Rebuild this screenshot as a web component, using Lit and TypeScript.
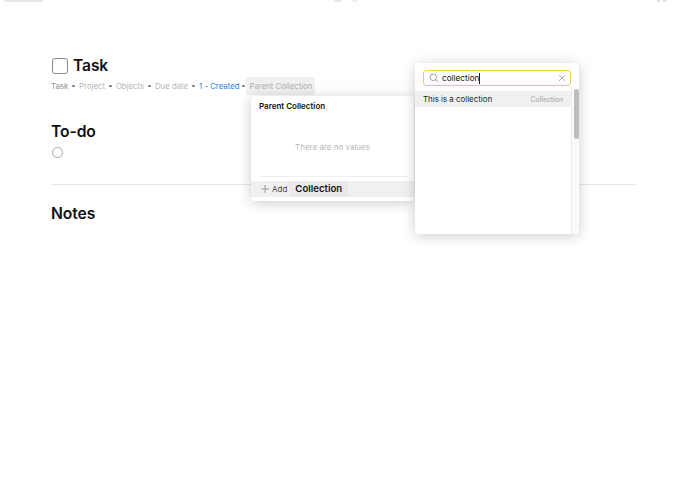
import { LitElement, html, css } from 'lit';
import { customElement } from 'lit/decorators.js';

const META = [
  { label: 'Project', cls: 'muted' },
  { label: 'Objects', cls: 'muted' },
  { label: 'Due date', cls: 'muted' },
  { label: '1 - Created', cls: 'link' },
];

@customElement('app-root')
export class AppRoot extends LitElement {
  static styles = css`
    :host {
      display: block;
      position: relative;
      width: 688px;
      height: 500px;
      overflow: hidden;
      background: #fff;
      font-family: Inter, 'Liberation Sans', sans-serif;
      color: #111;
    }

    /* top toolbar, scrolled almost out of view */
    .topbar {
      display: flex;
      height: 2px;
      padding-left: 4px;
      padding-right: 19px;
    }
    .chip { height: 2px; background: #e6e6e6; border-radius: 0 0 3px 3px; }
    .chip.a { width: 39px; margin-right: 291px; }
    .chip.b { width: 8px; margin-right: 10px; }
    .chip.c { width: 6px; background: #eee; margin-right: auto; }
    .chip.d { width: 3px; background: #ddd; margin-right: 3px; }

    .page { padding: 54px 52px 0 51px; }

    .title-row { display: flex; align-items: center; gap: 5px; height: 20px; }
    .check {
      box-sizing: border-box;
      width: 16px;
      height: 16px;
      margin: -1px 0 0 1px;
      border: 1.2px solid #8c8c8c;
      border-radius: 3px;
    }
    h1 { margin: 0; font-size: 15.6px; line-height: 20px; font-weight: 600; letter-spacing: -0.1px; }

    .meta { display: flex; align-items: center; height: 18px; margin-top: 1px; font-size: 7.8px; color: #8f8f8f; white-space: nowrap; }
    .meta .muted { color: #b6b6b6; }
    .meta .link { color: #2f7fe0; }
    .dot { width: 2.5px; height: 2.5px; border-radius: 50%; background: #777; margin: 0 4.2px; }
    .dot.tight { margin: 0 1.5px 0 3px; }
    .meta .active { background: #f0f0f0; color: #b0b0b0; padding: 0 3px; height: 18px; line-height: 18px; border-radius: 2px; }

    h2 { margin: 0; font-size: 15.7px; line-height: 20px; font-weight: 600; letter-spacing: -0.1px; }
    .todo { margin-top: 27px; }
    .radio { width: 9px; height: 9px; margin: 5px 0 0 1px; border: 1px solid #a8a8a8; border-radius: 50%; }
    hr { margin: 26px 0 0; border: 0; border-top: 1px solid #e6e6e6; }
    .notes { margin-top: 19px; }

    .popup {
      position: absolute;
      background: #fff;
      border-radius: 4px;
      box-shadow: 0 2px 14px rgba(0, 0, 0, 0.2);
    }

    .values { left: 251px; top: 96px; width: 163px; height: 105px; display: flex; flex-direction: column; }
    .values .head { padding: 5px 8px 0; font-size: 8px; line-height: 10px; font-weight: 600; }
    .values .empty { flex: 1; display: flex; align-items: center; justify-content: center; padding-top: 6px; font-size: 8px; color: #b8b8b8; }
    .values .rule { margin: 0 6px 0 8px; border-top: 1px solid #eee; }
    .add { display: flex; align-items: center; height: 16px; margin: 4px 0 4px; background: #f0f0f0; font-size: 8px; color: #444; padding-left: 9px; }
    .add svg { display: block; margin-right: 2px; }
    .add .name { padding: 0 6px; height: 16px; line-height: 15px; background: #e9e9e9; font-size: 9.6px; font-weight: 600; color: #111; margin-left: 2px; }

    .search { left: 415px; top: 63px; width: 164px; height: 171px; display: flex; flex-direction: column; }
    .field {
      box-sizing: border-box;
      display: flex;
      align-items: center;
      height: 16px;
      margin: 7px 8px 0 8px;
      padding: 0 4px 0 5px;
      border: 1.5px solid #f5cd47;
      border-radius: 3px;
      font-size: 8.2px;
    }
    .field svg { display: block; flex: none; }
    .field .value { margin-left: 3px; border-right: 1px solid #222; line-height: 11px; }
    .field .clear { margin-left: auto; }
    .body { flex: 1; display: flex; min-height: 0; margin-top: 1px; }
    .list { flex: 1; min-width: 0; padding-top: 4px; }
    .row { display: flex; justify-content: space-between; align-items: center; height: 16px; padding: 0 8px; background: #f0f0f0; font-size: 7.9px; color: #222; }
    .row .type { font-size: 6.9px; color: #a0a0a0; }
    .track { flex: none; width: 8px; padding: 2px 0 0 2px; box-sizing: border-box; background: #fafafa; border-left: 1px solid #ececec; border-radius: 0 0 4px 0; }
    .thumb { width: 4.5px; height: 50px; border-radius: 3px; background: #bdbdbd; }
  `;

  render() {
    return html`
      <div class="topbar">
        <span class="chip a"></span><span class="chip b"></span><span class="chip c"></span>
        <span class="chip d"></span><span class="chip d"></span>
      </div>
      <main class="page">
        <div class="title-row"><span class="check"></span><h1>Task</h1></div>
        <div class="meta">
          <span>Task</span>
          ${META.map((m) => html`<span class="dot"></span><span class=${m.cls}>${m.label}</span>`)}
          <span class="dot tight"></span><span class="active">Parent Collection</span>
        </div>
        <h2 class="todo">To-do</h2>
        <div class="radio"></div>
        <hr />
        <h2 class="notes">Notes</h2>
      </main>

      <section class="popup values">
        <div class="head">Parent Collection</div>
        <div class="empty">There are no values</div>
        <div class="rule"></div>
        <div class="add">
          <svg width="10" height="10" viewBox="0 0 10 10" fill="none" stroke="#999" stroke-width="1"><path d="M5 1v8M1 5h8" /></svg>
          <span>Add</span><span class="name">Collection</span>
        </div>
      </section>

      <section class="popup search">
        <div class="field">
          <svg width="10" height="10" viewBox="0 0 10 10" fill="none" stroke="#888" stroke-width="0.8"><circle cx="4.3" cy="4.3" r="3.3" /><path d="M6.8 6.8L9.4 9.4" /></svg>
          <span class="value">collection</span>
          <svg class="clear" width="8" height="8" viewBox="0 0 8 8" fill="none" stroke="#999" stroke-width="0.8"><path d="M1 1l6 6M7 1L1 7" /></svg>
        </div>
        <div class="body">
          <div class="list">
            <div class="row"><span>This is a collection</span><span class="type">Collection</span></div>
          </div>
          <div class="track"><div class="thumb"></div></div>
        </div>
      </section>
    `;
  }
}
